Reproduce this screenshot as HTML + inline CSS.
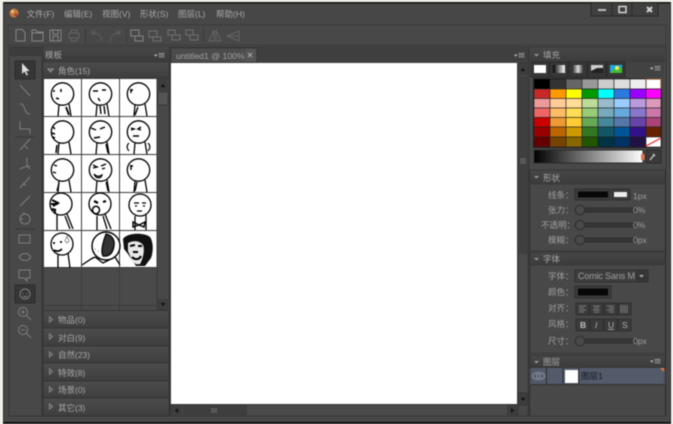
<!DOCTYPE html>
<html><head><meta charset="utf-8"><style>
html,body{margin:0;padding:0;background:#f2f0ea;width:673px;height:424px;overflow:hidden}
svg{display:block;filter:blur(.45px)}
text{font-family:"Liberation Sans","Noto Sans CJK SC",sans-serif;font-size:8.5px;fill:#a8a8a8}
</style></head><body>
<svg width="673" height="424" viewBox="0 0 673 424" xmlns="http://www.w3.org/2000/svg">
<defs>
<linearGradient id="h" x1="0" y1="0" x2="0" y2="1"><stop offset="0" stop-color="#474747"/><stop offset="1" stop-color="#3b3b3b"/></linearGradient>
<linearGradient id="c" x1="0" y1="0" x2="0" y2="1"><stop offset="0" stop-color="#4c4c4c"/><stop offset="1" stop-color="#3e3e3e"/></linearGradient>
<linearGradient id="g" x1="0" y1="0" x2="1" y2="0"><stop offset="0" stop-color="#000"/><stop offset="1" stop-color="#fff"/></linearGradient>
<linearGradient id="g2" x1="0" y1="0" x2="1" y2="0"><stop offset="0" stop-color="#222"/><stop offset=".5" stop-color="#ddd"/><stop offset="1" stop-color="#222"/></linearGradient>
<g id="b" fill="none" stroke="#000" stroke-width="1.3"><circle cx="18.500" cy="15" r="11.200" fill="#fff"/><path d="M15 26L14 37M25 25L27 37"/></g>
<g id="m"><path d="M0 1.500h3.500L1.750 3.800z" fill="#bbb"/><path d="M4.500 .5h6M4.500 2.200h6M4.500 3.900h6" stroke="#999" stroke-width=".9"/></g>
<g id="sl"><rect x="0" y="3" width="62" height="4" rx="2" fill="#363636" stroke="#2c2c2c"/><circle cx="5" cy="5" r="4.800" fill="#4a4a4a" stroke="#2c2c2c"/></g>
</defs>

<rect x="3" y="2" width="668" height="420" fill="#474747"/>
<rect x="3" y="2" width="668" height="1.500" fill="#111"/>
<rect x="3" y="422" width="668" height="2" fill="#111"/>
<rect x="3" y="2" width="1" height="420" fill="#2b2b2b"/><rect x="670" y="2" width="1" height="420" fill="#2b2b2b"/>
<!-- window buttons -->
<rect x="591" y="3" width="67" height="13" fill="#3f3f3f"/>
<path d="M591 3v13h67V3M612 3v13M632 3v13" stroke="#2a2a2a" fill="none"/>
<rect x="598" y="9" width="8" height="2" fill="#bdbdbd"/>
<rect x="619" y="6.500" width="7" height="6" fill="none" stroke="#d4d4d4" stroke-width="1.500"/>
<path d="M647 7l5 5M652 7l-5 5" stroke="#d4d4d4" stroke-width="2"/>

<!-- logo & menu -->
<circle cx="14" cy="13" r="4.500" fill="#c2793f"/><circle cx="12.500" cy="11.500" r="1.400" fill="#e8d08a"/><circle cx="16" cy="15" r="1.400" fill="#a33"/>
<text x="26.500" y="17">文件(F)</text><text x="64" y="17">编辑(E)</text><text x="102" y="17">视图(V)</text><text x="140" y="17">形状(S)</text><text x="178" y="17">图层(L)</text><text x="216" y="17">帮助(H)</text>

<!-- toolbar -->
<rect x="8" y="25" width="658" height="20" fill="#484848" stroke="#3c3c3c"/>
<g fill="none" stroke="#858585" stroke-width="1">
<path d="M16 29.500h6l3 3v8.500h-9z"/>
<path d="M32 30h4l1 2h6v9H32zM32 33h11"/>
<path d="M50 30h11v11H50zM53 30v4h5v-4M53 41v-5h5v5"/>
<path d="M69 33h10v5H69zM71 33v-3h6v3M71 38v3h6v-3" stroke="#636363"/>
<path d="M92 33l4-3M92 30v4h4M92 33c5-1 9 2 10 8" stroke="#5c5c5c"/>
<path d="M120 33l-4-3M120 30v4h-4M120 33c-5-1-9 2-10 8" stroke="#5c5c5c"/>
<path d="M131 30h8v6h-8zM135 36h8v5h-8z"/>
<path d="M149 31h8v6h-8zM153 37h8v4h-8z" stroke="#707070"/>
<path d="M168 30h7v5h-7zM172 35h8v5h-8z" stroke="#707070"/>
<path d="M186 30h7v5h-7zM190 35h8v5h-8z" stroke="#707070"/>
<path d="M214 30l-5 11h5zM216 30l5 11h-5z" stroke="#646464"/>
<path d="M239 31l-12 5 12 5zM239 36h-12" stroke="#646464"/>
</g>
<path d="M85.500 28v15M126.500 28v15M203.500 28v15" stroke="#3a3a3a"/>

<!-- left toolbox -->
<rect x="9" y="47" width="33" height="369" fill="#484848" stroke="#363636"/>
<rect x="9" y="47" width="33" height="9" fill="#3c3c3c"/>
<rect x="15" y="61" width="20" height="18" fill="#363636" stroke="#2c2c2c"/>
<path d="M22 63v11l2.500-2.500 2 4 1.500-.8-2-3.700h3.500z" fill="#ddd"/>
<g fill="none" stroke="#7e7e7e" stroke-width="1">
<path d="M20 85l10 11"/><path d="M20 104c6-1 3 10 10 10"/><path d="M20 121v8h10v5"/>
<path d="M20 150l10-11M25 146l3 3"/><path d="M20 169l4-2 6-1M27 158v8l3 3"/><path d="M20 188l10-11M23 183l3 3"/><path d="M20 206l10-10"/>
<circle cx="25" cy="219" r="5"/><path d="M25 214l-2-1.500M20 219h3"/>
<path d="M15 137h20M15 229h20" stroke="#363636"/>
<rect x="19" y="235" width="11" height="8"/><ellipse cx="25" cy="257" rx="5.500" ry="3.500"/><path d="M19 270h11v8h-3v3l-3-3h-5z"/>
</g>
<rect x="15" y="285" width="20" height="18" fill="#363636" stroke="#2c2c2c"/>
<circle cx="25" cy="294" r="5" fill="none" stroke="#808080"/><path d="M23 293v1M27 293v1M23 296l2 1 2-1" stroke="#808080" fill="none"/>
<g fill="none" stroke="#7e7e7e"><circle cx="23" cy="312" r="4.500"/><path d="M26.500 315.500l4.500 4.500M21 312h4M23 310v4"/><circle cx="23" cy="330" r="4.500"/><path d="M26.500 333.500l4.500 4.500M21 330h4"/></g>

<!-- template panel -->
<rect x="43" y="47" width="126" height="369" fill="#434343" stroke="#363636"/>
<rect x="43" y="47" width="126" height="14" fill="url(#h)"/><text x="45" y="58">模板</text><use href="#m" x="154" y="53"/>
<rect x="43" y="62" width="126" height="16" fill="url(#c)" stroke="#383838"/><path d="M48 69h5l-2.500 3z" fill="none" stroke="#999"/><text x="58" y="74">角色(15)</text>
<rect x="44" y="79" width="113" height="232" fill="#4a4a4a"/>
<rect x="44" y="79" width="113" height="188" fill="#fff"/>
<g stroke="#3c3c3c" stroke-width="1"><path d="M81.500 79v232M119.500 79v232M44 116.500h113M44 154.500h113M44 192.500h113M44 230.500h113M44 267.500h113M44 305.500h113"/></g>
<rect x="157" y="79" width="12" height="232" fill="#484848" stroke="#383838"/>
<rect x="158" y="79" width="10" height="12" fill="#3d3d3d"/><path d="M160.500 87l2.500-3 2.500 3z" fill="#111"/>
<rect x="158" y="92" width="10" height="13" fill="#555" stroke="#3a3a3a"/>
<rect x="158" y="299" width="10" height="12" fill="#3d3d3d"/><path d="M160.500 303l2.500 3 2.500-3z" fill="#111"/>

<!-- figures -->
<g fill="none" stroke="#000" stroke-width="1.200">
<g transform="translate(44,79)"><use href="#b"/><path d="M10 11v2M17 10v3M12 19l3 1" stroke-width="1.500"/><path d="M22 28l3 8" stroke-width="1.800"/></g>
<g transform="translate(82,79)"><use href="#b"/><path d="M11 12h5M20 11h4M16 19l2 3M18 27l1 8M22 27l1 8" stroke-width="1.400"/></g>
<g transform="translate(120,79)"><use href="#b"/><path d="M10 11h3M11 10v4M18 28l-3 8" stroke-width="1.400"/></g>
<g transform="translate(44,117)"><use href="#b"/><path d="M9 10l2 2M8 16l3 1M9 20l2 1M13 28l-1 8" stroke-width="1.500"/></g>
<g transform="translate(82,117)"><use href="#b"/><path d="M9 11l5 2M18 12l5-2M12 21l6-1M24 27l2 9" stroke-width="1.400"/></g>
<g transform="translate(120,117)"><use href="#b"/><path d="M11 11l3 1-3 1M21 10l-3 2 3 1M13 19h6" stroke-width="1.400"/><path d="M9 26c-3 3-2 6 0 8M28 26c3 3 2 6 0 8"/></g>
<g transform="translate(44,155)"><use href="#b"/><path d="M10 10l3 1M9 17l3 1M15 28l-2 8" stroke-width="1.400"/></g>
<g transform="translate(82,155)"><use href="#b"/><path d="M11 10l4 2-4 1M19 11l5-2M20 14l3-1" stroke-width="1.400"/><path d="M12 19c2 2 5 3 8 1-1 4-6 4-8-1z" fill="#999"/><path d="M24 27l2 9"/></g>
<g transform="translate(120,155)"><use href="#b"/><path d="M10 11h3M11 10v5M17 27l-2 9" stroke-width="1.400"/></g>
<g transform="translate(44,193)"><circle cx="17" cy="11" r="11" fill="#fff" stroke-width="1.300"/><path d="M8 7l6 3-5 3M7 11h7M8 16l4 1" stroke-width="2"/><path d="M13 21v16M23 21l6 15M21 23l5 13" stroke-width="1.300"/><path d="M11 17v4" stroke-width="1.800"/></g>
<g transform="translate(82,193)"><circle cx="18" cy="11" r="11" fill="#fff" stroke-width="1.300"/><path d="M12 8l4 2M21 9l3-1" stroke-width="2.200"/><ellipse cx="14" cy="17" rx="3.500" ry="3.800" fill="#fff" stroke-width="1.500"/><path d="M15 23v14M23 21l6 15M21 23l4 13" stroke-width="1.300"/></g>
<g transform="translate(120,193)"><circle cx="20" cy="12" r="11" fill="#fff" stroke-width="1.300"/><path d="M14 10h5M22 10h4M15 13h2M23 13h2M17 18h5" stroke-width="1.200"/><path d="M13 29l6 3 6-3-1 5-5-2-6 2z" stroke-width="1.400"/><path d="M15 23v14M26 22v15" stroke-width="1.300"/></g>
<g transform="translate(44,231)"><circle cx="18" cy="13" r="11" fill="#fff" stroke-width="1.300"/><path d="M9 12h2M16 11h2M10 19c3 2 6 1 8-1" stroke-width="1.800"/><path d="M23 5l-2 5 2 2 2-2z" stroke-width=".8" stroke="#777"/><path d="M14 24v13M24 22l2 15" stroke-width="1.300"/></g>
<g transform="translate(82,231)"><circle cx="24" cy="15" r="14" fill="#fff" stroke-width="1.400"/><path d="M0 34l9-6 4-2M33 26l5 8M13 26l8 6 8-4" stroke-width="1.300"/><path d="M24 3c6 1 9 6 8 12s-4 11-11 10c-3-5 1-17 3-22z" fill="#333"/><path d="M13 18h.5M16 20h.5M12 21h.5" stroke-width="1"/></g>
<g transform="translate(120,231)"><path d="M3 8c3-6 21-7 27-2 4 6 3 16 1 21l-6 8-9 0L8 23 4 18z" fill="#111" stroke="none"/><path d="M8 12c6-3 12-2 15 2 2 5 0 14-3 19-4 1-7-1-8-4L8 20z" fill="#e8e8e8" stroke="none"/><path d="M10 15l5-1M18 15l4 0M13 21l5 0M12 26c3 3 7 3 9-1" stroke-width="2"/></g>
</g>

<!-- category headers -->
<g fill="url(#c)" stroke="#333"><rect x="43" y="310.500" width="126" height="17.500"/><rect x="43" y="328" width="126" height="18"/><rect x="43" y="346" width="126" height="17"/><rect x="43" y="363" width="126" height="18"/><rect x="43" y="381" width="126" height="17"/><rect x="43" y="398" width="126" height="18"/></g>
<g fill="none" stroke="#888"><path d="M49.500 317v5l3-2.500zM49.500 334v5l3-2.500zM49.500 352v5l3-2.500zM49.500 369v5l3-2.500zM49.500 387v5l3-2.500zM49.500 404v5l3-2.500z"/></g>
<text x="58" y="323">物品(0)</text><text x="58" y="341">对白(9)</text><text x="58" y="358">自然(23)</text><text x="58" y="376">特效(8)</text><text x="58" y="393">场景(0)</text><text x="58" y="411">其它(3)</text>

<!-- center -->
<rect x="170" y="47" width="358" height="369" fill="#464646" stroke="#363636"/>
<rect x="170" y="47" width="358" height="15" fill="#3f3f3f"/>
<rect x="171" y="48" width="86" height="15" fill="#4c4c4c" stroke="#363636"/>
<text x="176" y="59" style="fill:#a0a0a0;font-size:8.700px">untitled1 @ 100%</text>
<rect x="245" y="49" width="11" height="12" fill="#555"/><path d="M248 53l4 4M252 53l-4 4" stroke="#aaa"/>
<use href="#m" x="514" y="53"/>
<rect x="171" y="63" width="346" height="341" fill="#fff"/>
<rect x="518" y="63" width="10" height="342" fill="#4a4a4a" stroke="#383838"/>
<rect x="518" y="63" width="10" height="12" fill="#3d3d3d"/><path d="M520.500 71l2.500-3 2.500 3z" fill="#111"/>
<rect x="518" y="76" width="10" height="178" fill="#3f3f3f"/><path d="M520 159h6M520 161h6M520 163h6" stroke="#707070"/>
<rect x="518" y="393" width="10" height="12" fill="#3d3d3d" stroke="#333"/><path d="M520.500 398l2.500 3 2.500-3z" fill="#111"/>
<rect x="171" y="404.500" width="347" height="11.500" fill="#4a4a4a" stroke="#383838"/>
<rect x="171" y="405" width="11" height="11" fill="#3d3d3d"/><path d="M178 408v5l-3-2.500z" fill="#111"/>
<rect x="183" y="405" width="64" height="11" fill="#3e3e3e"/><path d="M212 408v5M214 408v5M216 408v5" stroke="#707070"/>
<rect x="507" y="405" width="11" height="11" fill="#3d3d3d"/><path d="M511 408v5l3-2.500z" fill="#111"/>
<rect x="518" y="405" width="10" height="11" fill="#474747" stroke="#383838"/>

<!-- right panel -->
<rect x="529" y="47" width="137" height="369" fill="#484848" stroke="#363636"/>
<rect x="530" y="48" width="135" height="14" fill="url(#h)"/><path d="M534 54h5l-2.500 2.500z" fill="#999"/><text x="543" y="58">填充</text>
<rect x="531" y="62" width="133" height="15" fill="#424242"/>
<g stroke="#2c2c2c" fill="#363636"><rect x="531" y="62" width="18" height="15"/><rect x="550" y="62" width="18" height="15"/><rect x="569" y="62" width="18" height="15"/><rect x="588" y="62" width="18" height="15"/><rect x="607" y="62" width="18" height="15"/></g>
<rect x="534" y="65" width="12" height="8" fill="#fff"/>
<rect x="553" y="65" width="12" height="8" fill="url(#g)"/>
<rect x="572" y="65" width="12" height="8" fill="url(#g2)"/>
<rect x="591" y="65" width="12" height="8" fill="#222"/><path d="M591 65h12v3h-6l-6 3z" fill="#ccc"/>
<rect x="610" y="65" width="12" height="8" fill="#2ad"/><path d="M610 73l4-4 3 1 5-3v6z" fill="#4b3"/><circle cx="617" cy="68" r="2" fill="#ee4"/>
<use href="#m" x="650" y="66"/>
<rect x="533" y="78" width="129" height="70" fill="#222"/>
<g stroke="#222" stroke-width=".6">
<rect x="534" y="79" width="16" height="10" fill="#000"/><rect x="550" y="79" width="16" height="10" fill="#333"/><rect x="566" y="79" width="16" height="10" fill="#666"/><rect x="582" y="79" width="16" height="10" fill="#999"/><rect x="598" y="79" width="16" height="10" fill="#ccc"/><rect x="614" y="79" width="16" height="10" fill="#ddd"/><rect x="630" y="79" width="16" height="10" fill="#eee"/><rect x="646" y="79" width="15" height="10" fill="#fff" stroke="#8a5a40" stroke-width="1.200"/>
<rect x="534" y="89" width="16" height="9.500" fill="#c82828"/><rect x="550" y="89" width="16" height="9.500" fill="#f90"/><rect x="566" y="89" width="16" height="9.500" fill="#ff0"/><rect x="582" y="89" width="16" height="9.500" fill="#090"/><rect x="598" y="89" width="16" height="9.500" fill="#0ff"/><rect x="614" y="89" width="16" height="9.500" fill="#2a7ae0"/><rect x="630" y="89" width="16" height="9.500" fill="#90f"/><rect x="646" y="89" width="15" height="9.500" fill="#f0f"/>
<rect x="534" y="98.500" width="16" height="9.500" fill="#e99"/><rect x="550" y="98.500" width="16" height="9.500" fill="#fc9"/><rect x="566" y="98.500" width="16" height="9.500" fill="#fd9"/><rect x="582" y="98.500" width="16" height="9.500" fill="#bd9"/><rect x="598" y="98.500" width="16" height="9.500" fill="#9bc"/><rect x="614" y="98.500" width="16" height="9.500" fill="#9cf"/><rect x="630" y="98.500" width="16" height="9.500" fill="#b9d"/><rect x="646" y="98.500" width="15" height="9.500" fill="#d9b"/>
<rect x="534" y="108" width="16" height="9.500" fill="#e66"/><rect x="550" y="108" width="16" height="9.500" fill="#fb6"/><rect x="566" y="108" width="16" height="9.500" fill="#fd5"/><rect x="582" y="108" width="16" height="9.500" fill="#9c7"/><rect x="598" y="108" width="16" height="9.500" fill="#7ab"/><rect x="614" y="108" width="16" height="9.500" fill="#6ad"/><rect x="630" y="108" width="16" height="9.500" fill="#87c"/><rect x="646" y="108" width="15" height="9.500" fill="#c7a"/>
<rect x="534" y="117.500" width="16" height="9.500" fill="#c00"/><rect x="550" y="117.500" width="16" height="9.500" fill="#e93"/><rect x="566" y="117.500" width="16" height="9.500" fill="#fc3"/><rect x="582" y="117.500" width="16" height="9.500" fill="#6a5"/><rect x="598" y="117.500" width="16" height="9.500" fill="#489"/><rect x="614" y="117.500" width="16" height="9.500" fill="#57a"/><rect x="630" y="117.500" width="16" height="9.500" fill="#64a"/><rect x="646" y="117.500" width="15" height="9.500" fill="#a47"/>
<rect x="534" y="127" width="16" height="10" fill="#900"/><rect x="550" y="127" width="16" height="10" fill="#b60"/><rect x="566" y="127" width="16" height="10" fill="#c90"/><rect x="582" y="127" width="16" height="10" fill="#372"/><rect x="598" y="127" width="16" height="10" fill="#156"/><rect x="614" y="127" width="16" height="10" fill="#059"/><rect x="630" y="127" width="16" height="10" fill="#318"/><rect x="646" y="127" width="15" height="10" fill="#620"/>
<rect x="534" y="137" width="16" height="10" fill="#600"/><rect x="550" y="137" width="16" height="10" fill="#740"/><rect x="566" y="137" width="16" height="10" fill="#860"/><rect x="582" y="137" width="16" height="10" fill="#250"/><rect x="598" y="137" width="16" height="10" fill="#034"/><rect x="614" y="137" width="16" height="10" fill="#036"/><rect x="630" y="137" width="16" height="10" fill="#214"/><rect x="646" y="137" width="15" height="10" fill="#fff"/>
</g>
<path d="M646 146l15-8" stroke="#e22" stroke-width="1.200"/>
<rect x="534" y="150" width="109" height="13" fill="url(#g)" stroke="#2a2a2a"/>
<rect x="641" y="154" width="3.500" height="6" fill="#e0764e"/>
<rect x="646" y="150" width="15" height="13" fill="#3a3a3a" stroke="#2a2a2a"/><path d="M650 160l4-5M653 154l2 2" stroke="#ccc" stroke-width="1.300"/>

<rect x="530" y="170" width="135" height="14" fill="url(#h)" stroke="#363636"/><path d="M534 176h5l-2.500 2.500z" fill="#999"/><text x="543" y="181">形状</text>
<rect x="530" y="184" width="135" height="67" fill="none" stroke="#3a3a3a"/>
<g style="opacity:.9">
<text x="548" y="198">线条：</text><rect x="575" y="189" width="35" height="11" fill="#3a3a3a" stroke="#2e2e2e"/><rect x="578" y="191.500" width="30" height="6" fill="#000"/>
<rect x="612" y="189" width="18" height="11" fill="#3a3a3a" stroke="#2e2e2e"/><rect x="614" y="192" width="13" height="5" fill="#fff"/>
<text x="633" y="199">1px</text>
<text x="548" y="213">张力：</text><use href="#sl" x="575" y="205"/><text x="633" y="213">0%</text>
<text x="541" y="228">不透明：</text><use href="#sl" x="575" y="220"/><text x="633" y="228">0%</text>
<text x="548" y="243">模糊：</text><use href="#sl" x="575" y="235"/><text x="633" y="243">0px</text>
</g>

<rect x="530" y="252" width="135" height="13" fill="url(#h)" stroke="#363636"/><path d="M534 258h5l-2.500 2.500z" fill="#999"/><text x="543" y="262">字体</text>
<rect x="530" y="265" width="135" height="88" fill="none" stroke="#3a3a3a"/>
<g style="opacity:.9">
<text x="548" y="279">字体：</text><rect x="575" y="270" width="73" height="12" fill="#3e3e3e" stroke="#2e2e2e"/><text x="578" y="279" textLength="57" style="font-size:9px">Comic Sans M</text><rect x="636" y="271" width="11" height="10" fill="#333"/><path d="M639 275h5l-2.500 2.500z" fill="#bbb"/>
<text x="548" y="295">颜色：</text><rect x="575" y="286" width="36" height="12" fill="#3a3a3a" stroke="#2e2e2e"/><rect x="578" y="288.500" width="30" height="7" fill="#000"/>
<text x="548" y="311">对齐：</text><g fill="#3a3a3a" stroke="#2e2e2e"><rect x="576" y="303" width="13" height="12"/><rect x="590" y="303" width="13" height="12"/><rect x="604" y="303" width="13" height="12"/><rect x="618" y="303" width="13" height="12"/></g>
<path d="M579 306h7M579 308h5M579 310h7M579 312h5M593 306h7M594 308h5M593 310h7M594 312h5M607 306h7M609 308h5M607 310h7M609 312h5M621 305v8M623 305v8M625 305v8M627 305v8" stroke="#808080"/>
<text x="548" y="327">风格：</text><g fill="#3a3a3a" stroke="#2e2e2e"><rect x="576" y="319" width="13" height="12"/><rect x="590" y="319" width="13" height="12"/><rect x="604" y="319" width="13" height="12"/><rect x="618" y="319" width="13" height="12"/></g>
<text x="580" y="328" style="font-weight:bold;fill:#ccc">B</text><text x="595" y="328" style="font-style:italic;fill:#bbb">I</text><text x="608" y="328" style="text-decoration:underline;fill:#bbb">U</text><text x="622" y="328" style="fill:#bbb">S</text>
<text x="548" y="344">尺寸：</text><use href="#sl" x="575" y="336"/><text x="633" y="344">0px</text>
</g>

<rect x="530" y="355" width="135" height="13" fill="url(#h)" stroke="#363636"/><path d="M534 361h5l-2.500 2.500z" fill="#999"/><text x="543" y="365">图层</text><use href="#m" x="650" y="359"/>
<rect x="531" y="368" width="133" height="16" fill="#535b6b"/>
<path d="M546.500 368v16M563 368v16M579 368v16M531 384.500h133" stroke="#2f2f2f"/>
<ellipse cx="538.500" cy="376" rx="6" ry="3.500" fill="none" stroke="#8a92a0"/><circle cx="538.500" cy="376" r="2" fill="none" stroke="#8a92a0"/>
<rect x="565" y="370" width="13" height="13" fill="#fff"/>
<text x="581" y="379" style="fill:#15181f">图层1</text>
<path d="M660 368h4v4z" fill="#e8773a"/>
<rect x="530" y="385" width="135" height="31" fill="none" stroke="#3a3a3a"/>
</svg>
</body></html>
